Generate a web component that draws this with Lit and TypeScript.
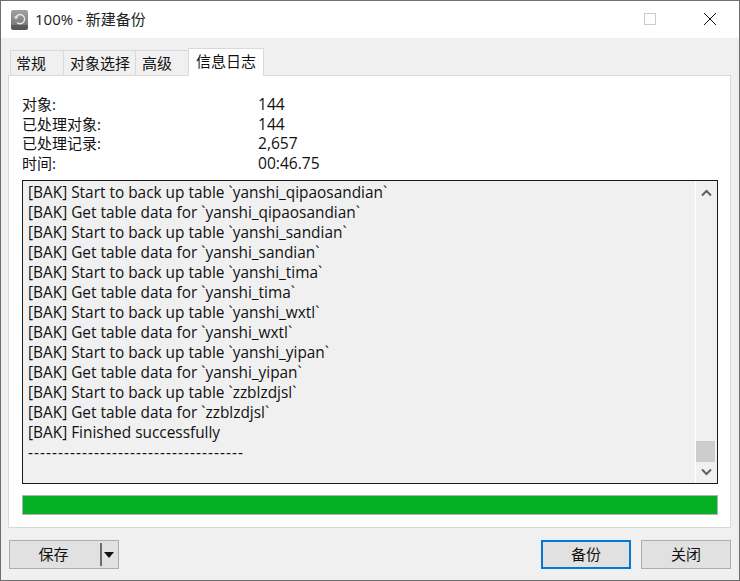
import { LitElement, html, css } from "lit";
import { customElement } from "lit/decorators.js";

const LOG = [
  "[BAK] Start to back up table `yanshi_qipaosandian`",
  "[BAK] Get table data for `yanshi_qipaosandian`",
  "[BAK] Start to back up table `yanshi_sandian`",
  "[BAK] Get table data for `yanshi_sandian`",
  "[BAK] Start to back up table `yanshi_tima`",
  "[BAK] Get table data for `yanshi_tima`",
  "[BAK] Start to back up table `yanshi_wxtl`",
  "[BAK] Get table data for `yanshi_wxtl`",
  "[BAK] Start to back up table `yanshi_yipan`",
  "[BAK] Get table data for `yanshi_yipan`",
  "[BAK] Start to back up table `zzblzdjsl`",
  "[BAK] Get table data for `zzblzdjsl`",
  "[BAK] Finished successfully",
];
const INFO = [
  ["对象:", "144"],
  ["已处理对象:", "144"],
  ["已处理记录:", "2,657"],
  ["时间:", "00:46.75"],
];

@customElement("app-root")
export class AppRoot extends LitElement {
  static styles = css`
    :host {
      display: block;
      width: 740px;
      height: 581px;
      font-family: "Open Sans", "Noto Sans CJK SC", sans-serif;
      font-size: 15px;
      color: #111;
    }
    * { box-sizing: border-box; }
    .win {
      width: 740px;
      height: 581px;
      border: 1px solid #6e6e6e;
      background: #f0f0f0;
      display: flex;
      flex-direction: column;
    }
    .title {
      height: 37px;
      background: #fff;
      display: flex;
      align-items: center;
      padding-left: 10px;
      flex: none;
    }
    .app-icon { width: 17px; height: 20px; margin-right: 8px; flex: none; }
    .title-text { font-size: 15px; flex: 1; color: #222; position: relative; top: -1px; margin-left: -1px; }
    .ctl { width: 14px; height: 14px; flex: none; display: block; margin-top: -1px; }
    .ctl.max { margin-right: 46px; }
    .ctl.close { margin-right: 22px; }
    .tabs {
      display: flex;
      align-items: flex-end;
      height: 37px;
      padding-left: 9px;
      flex: none;
      position: relative;
      z-index: 1;
    }
    .tab {
      height: 25px;
      border: 1px solid #d9d9d9;
      border-bottom: none;
      border-right: none;
      background: #f0f0f0;
      display: flex;
      align-items: center;
      padding-left: 6px;
      padding-bottom: 2px;
    }
    .tab.first { padding-left: 5px; }
    .tab.active {
      height: 28px;
      background: #fff;
      margin-bottom: -1px;
      border-right: 1px solid #d9d9d9;
      padding-left: 7px;
      padding-bottom: 4px;
    }
    .panel {
      margin-left: 7px;
      width: 723px;
      height: 453px;
      background: #fff;
      border: 1px solid #d9d9d9;
      padding: 19px 12px 0 13px;
      flex: none;
    }
    .info {
      display: grid;
      grid-template-columns: 236px 1fr;
      grid-auto-rows: 19.7px;
      height: 85px;
      line-height: 19.7px;
    }
    .num { font-size: 15.6px; }
    .log {
      width: 696px;
      height: 304px;
      border: 1px solid #1a1a1a;
      background: #f0f0f0;
      display: flex;
    }
    .lines {
      flex: 1;
      padding: 2px 0 0 5px;
      font-size: 15.4px;
      line-height: 20px;
      white-space: pre;
      overflow: hidden;
    }
    .dashes { letter-spacing: 1.05px; }
    .scroll {
      width: 22px;
      flex: none;
      border-left: 1px solid #fff;
      display: flex;
      flex-direction: column;
      align-items: center;
    }
    .arrow { width: 11px; height: 8px; display: block; flex: none; }
    .arrow.up { margin-top: 8px; }
    .track { flex: 1; width: 100%; display: flex; flex-direction: column; justify-content: flex-end; padding-bottom: 6px; }
    .thumb { height: 21px; background: #cdcdcd; width: 19px; }
    .arrow.down { margin-bottom: 7px; }
    .progress {
      width: 696px;
      height: 20px;
      margin-top: 11px;
      border: 1px solid #b2b2b2;
      background: #06b025;
    }
    .footer {
      flex: 1;
      display: flex;
      align-items: flex-start;
      padding: 12px 8px 0 8px;
    }
    .btn {
      height: 29px;
      background: #e1e1e1;
      border: 1px solid #adadad;
      display: flex;
      align-items: center;
      justify-content: center;
      padding-bottom: 2px;
    }
    .save { width: 110px; justify-content: flex-start; padding-bottom: 0; }
    .save .label { width: 90px; text-align: center; padding-right: 3px; position: relative; top: -1px; }
    .save .sep { width: 2px; height: 23px; background: #6d6d6d; flex: none; }
    .save .caret {
      width: 0;
      height: 0;
      margin-left: 2px;
      border-style: solid;
      border-color: #111 transparent transparent transparent;
      border-width: 6px 5.5px 0 5.5px;
    }
    .spacer { flex: 1; }
    .primary { width: 90px; border: 2px solid #0078d7; margin-right: 10px; }
    .close-btn { width: 90px; }
  `;

  render() {
    return html`
      <div class="win">
        <div class="title">
          <svg class="app-icon" viewBox="0 0 17 20">
            <defs>
              <linearGradient id="g" x1="0" y1="0" x2="0" y2="1">
                <stop offset="0" stop-color="#a2a2a2" />
                <stop offset="0.72" stop-color="#7c7c7c" />
                <stop offset="0.76" stop-color="#5c5c5c" />
                <stop offset="1" stop-color="#555" />
              </linearGradient>
            </defs>
            <rect width="17" height="20" rx="2" fill="url(#g)" />
            <path d="M5 7 A4.6 4.6 0 1 1 6 12.6" fill="none" stroke="#e6e6e6" stroke-width="1.4" />
            <path d="M2.8 6.5 L7.4 6.5 L5 9.4 Z" fill="#e6e6e6" />
          </svg>
          <span class="title-text">100% - 新建备份</span>
          <svg class="ctl max" viewBox="0 0 14 14"><rect x="1.5" y="1.5" width="11" height="11" fill="none" stroke="#cccccc" /></svg>
          <svg class="ctl close" viewBox="0 0 14 14"><path d="M1 1 L13 13 M13 1 L1 13" stroke="#111" stroke-width="1" fill="none" /></svg>
        </div>
        <div class="tabs">
          <div class="tab first" style="width:53px">常规</div>
          <div class="tab" style="width:72px">对象选择</div>
          <div class="tab" style="width:53px">高级</div>
          <div class="tab active" style="width:76px">信息日志</div>
        </div>
        <div class="panel">
          <div class="info">
            ${INFO.map(([k, v]) => html`<div>${k}</div><div class="num">${v}</div>`)}
          </div>
          <div class="log">
            <div class="lines">${LOG.map((l) => html`<div>${l}</div>`)}<div class="dashes">------------------------------------</div></div>
            <div class="scroll">
              <svg class="arrow up" viewBox="0 0 11 8"><path d="M1 6.5 L5.5 2 L10 6.5" fill="none" stroke="#606060" stroke-width="2" /></svg>
              <div class="track"><div class="thumb"></div></div>
              <svg class="arrow down" viewBox="0 0 11 8"><path d="M1 1.5 L5.5 6 L10 1.5" fill="none" stroke="#606060" stroke-width="2" /></svg>
            </div>
          </div>
          <div class="progress"></div>
        </div>
        <div class="footer">
          <div class="btn save">
            <span class="label">保存</span><span class="sep"></span><span class="caret"></span>
          </div>
          <div class="spacer"></div>
          <div class="btn primary">备份</div>
          <div class="btn close-btn">关闭</div>
        </div>
      </div>
    `;
  }
}
